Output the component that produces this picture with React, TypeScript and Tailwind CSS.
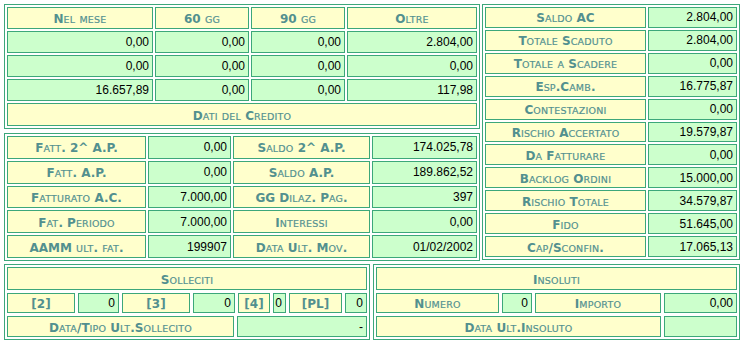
import React from "react";

type CellProps = { children?: React.ReactNode; className?: string };

// Splits a caption into capital runs (bold, full size) and lowercase runs (reduced capitals)
function Caps({ text }: { text: string }) {
  const runs: { small: boolean; s: string }[] = [];
  for (const ch of text) {
    const small = ch !== ch.toUpperCase();
    const last = runs[runs.length - 1];
    if (last && last.small === small) last.s += ch;
    else runs.push({ small, s: ch });
  }
  return (
    <>
      {runs.map((r, i) =>
        r.small ? (
          <span key={i} className="text-[9.5px] font-normal tracking-[0.2px] [-webkit-text-stroke:0.2px_#5a9697]">
            {r.s.toUpperCase()}
          </span>
        ) : (
          <span key={i} className="text-[12px] font-bold">
            {r.s}
          </span>
        )
      )}
    </>
  );
}

// Yellow caption cell with teal small-caps text
function Label({ text, className = "" }: { text: string; className?: string }) {
  return (
    <div
      className={`flex items-center justify-center border border-[#3ca77a] bg-[#ffffcc] font-['DejaVu_Sans',sans-serif] leading-none text-[#52908f] whitespace-nowrap overflow-hidden ${className}`}
    >
      <span className="leading-none">
        <Caps text={text} />
      </span>
    </div>
  );
}

// Green value cell, right aligned figures
function Value({ children, className = "" }: CellProps) {
  return (
    <div
      className={`flex items-center justify-end border border-[#3ca77a] bg-[#ccffcc] pr-[3px] font-['Liberation_Sans',Arial,sans-serif] text-[12px] leading-none text-black whitespace-nowrap overflow-hidden ${className}`}
    >
      {children}
    </div>
  );
}

// Framed panel around a group of cells
function Panel({ children, className = "" }: CellProps) {
  return <div className={`border border-[#3ca77a] bg-white p-[2px] ${className}`}>{children}</div>;
}

const scadenze = [
  ["0,00", "0,00", "0,00", "2.804,00"],
  ["0,00", "0,00", "0,00", "0,00"],
  ["16.657,89", "0,00", "0,00", "117,98"],
];

const fatturato: [string, string, string, string][] = [
  ["Fatt. 2^ A.P.", "0,00", "Saldo 2^ A.P.", "174.025,78"],
  ["Fatt. A.P.", "0,00", "Saldo A.P.", "189.862,52"],
  ["Fatturato A.C.", "7.000,00", "GG Dilaz. Pag.", "397"],
  ["Fat. Periodo", "7.000,00", "Interessi", "0,00"],
  ["AAMM ult. fat.", "199907", "Data Ult. Mov.", "01/02/2002"],
];

const saldi: [string, string][] = [
  ["Saldo AC", "2.804,00"],
  ["Totale Scaduto", "2.804,00"],
  ["Totale a Scadere", "0,00"],
  ["Esp.Camb.", "16.775,87"],
  ["Contestazioni", "0,00"],
  ["Rischio Accertato", "19.579,87"],
  ["Da Fatturare", "0,00"],
  ["Backlog Ordini", "15.000,00"],
  ["Rischio Totale", "34.579,87"],
  ["Fido", "51.645,00"],
  ["Cap/Sconfin.", "17.065,13"],
];

export default function App() {
  return (
    <div className="w-[744px] h-[344px] bg-white p-[4px] flex flex-col gap-[3px] overflow-hidden">
      <div className="flex gap-[2px] h-[257px]">
        <div className="w-[476px] flex flex-col gap-[4px]">
          <Panel className="h-[125px]">
            <div className="grid h-full grid-cols-[146px_94px_94px_1fr] grid-rows-[22px_22px_22px_22px_1fr] gap-[2px]">
              <Label text="Nel mese" />
              <Label text="60 gg" />
              <Label text="90 gg" />
              <Label text="Oltre" />
              {scadenze.map((row, i) =>
                row.map((v, j) => <Value key={`${i}-${j}`}>{v}</Value>)
              )}
              <Label className="col-span-4" text="Dati del Credito" />
            </div>
          </Panel>
          <Panel className="h-[128px]">
            <div className="grid h-full grid-cols-[139px_83px_137px_1fr] grid-rows-5 gap-[2px]">
              {fatturato.map(([a, b, c, d]) => (
                <React.Fragment key={a}>
                  <Label text={a} />
                  <Value>{b}</Value>
                  <Label text={c} />
                  <Value>{d}</Value>
                </React.Fragment>
              ))}
            </div>
          </Panel>
        </div>
        <Panel className="w-[258px] h-[256px]">
          <div className="grid h-full grid-cols-[161px_1fr] grid-rows-11 gap-[2px]">
            {saldi.map(([k, v]) => (
              <React.Fragment key={k}>
                <Label text={k} />
                <Value>{v}</Value>
              </React.Fragment>
            ))}
          </div>
        </Panel>
      </div>
      <div className="flex gap-[3px] h-[77px]">
        <Panel className="w-[366px]">
          <div className="flex h-full flex-col gap-[3px]">
            <Label className="h-[23px]" text="Solleciti" />
            <div className="grid h-[20px] grid-cols-[68px_41px_68px_42px_32px_13px_53px_1fr] gap-[3px]">
              <Label text="[2]" />
              <Value>0</Value>
              <Label text="[3]" />
              <Value>0</Value>
              <Label text="[4]" />
              <Value className="pr-[2px]">0</Value>
              <Label text="[PL]" />
              <Value>0</Value>
            </div>
            <div className="grid flex-1 grid-cols-[227px_1fr] gap-[3px]">
              <Label text="Data/Tipo Ult.Sollecito" />
              <Value>-</Value>
            </div>
          </div>
        </Panel>
        <Panel className="w-[367px]">
          <div className="flex h-full flex-col gap-[3px]">
            <Label className="h-[23px]" text="Insoluti" />
            <div className="grid h-[20px] grid-cols-[123px_30px_126px_1fr] gap-[3px]">
              <Label text="Numero" />
              <Value>0</Value>
              <Label text="Importo" />
              <Value>0,00</Value>
            </div>
            <div className="grid flex-1 grid-cols-[123px_30px_126px_1fr] gap-[3px]">
              <Label className="col-span-3" text="Data Ult.Insoluto" />
              <Value />
            </div>
          </div>
        </Panel>
      </div>
    </div>
  );
}
